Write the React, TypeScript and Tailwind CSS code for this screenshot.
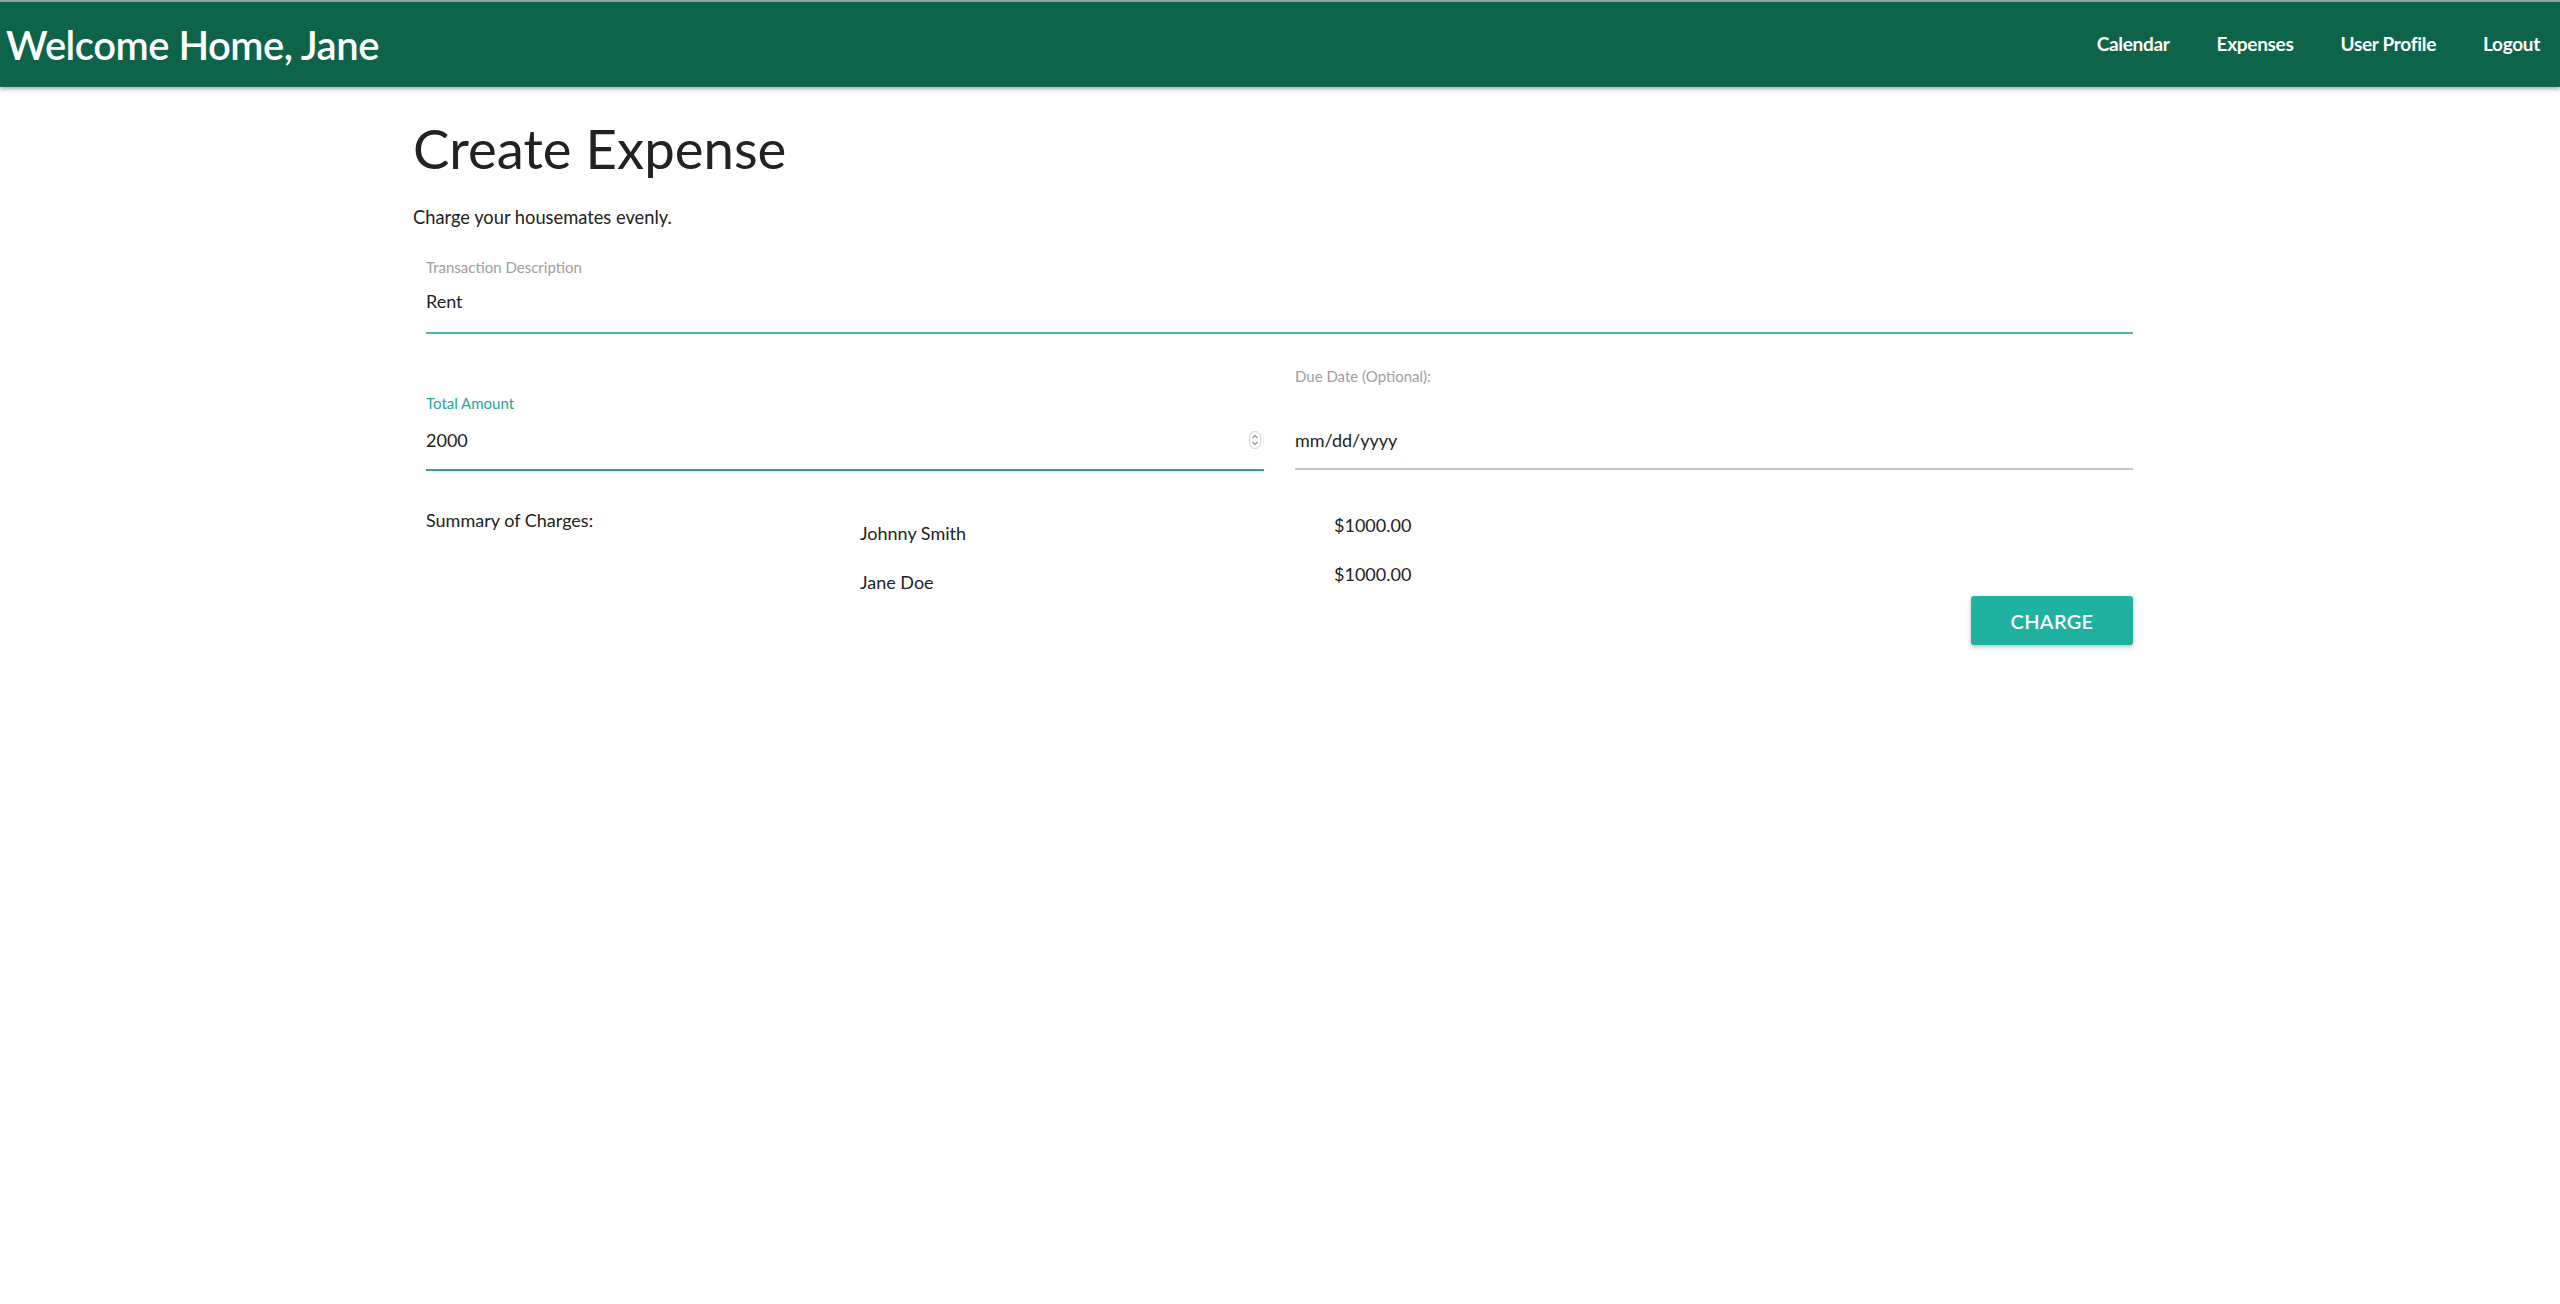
const font = { fontFamily: '"Gill Sans", Lato, "Noto Sans", sans-serif' };

const navLinks = ['Calendar', 'Expenses', 'User Profile', 'Logout'];

const charges = [
  { name: 'Johnny Smith', amount: '$1000.00' },
  { name: 'Jane Doe', amount: '$1000.00' },
];

function Header() {
  return (
    <header className="relative z-10 flex h-[87px] items-center justify-between border-t-2 border-[#8fa59c] bg-[#0e644a] pl-[6px] pr-[20px] shadow-[0_2px_4px_rgba(0,0,0,0.35)]">
      <h1 className="text-[40px] font-semibold tracking-[-0.5px] text-white">Welcome Home, Jane</h1>
      <nav className="flex items-center gap-[47px]">
        {navLinks.map((link) => (
          <a key={link} href="#" className="text-[19px] font-bold tracking-[-0.3px] text-white">
            {link}
          </a>
        ))}
      </nav>
    </header>
  );
}

function Spinner() {
  return (
    <svg width="12" height="18" viewBox="0 0 12 18" className="text-[#8a8a8a]">
      <rect x="0.5" y="0.5" width="11" height="17" rx="5.5" fill="none" stroke="#d5d5d5" />
      <path d="M3.5 7 L6 4.5 L8.5 7" fill="none" stroke="currentColor" strokeWidth="1.1" />
      <path d="M3.5 11 L6 13.5 L8.5 11" fill="none" stroke="currentColor" strokeWidth="1.1" />
    </svg>
  );
}

export default function App() {
  return (
    <div className="min-h-[1304px] bg-white text-[#222]" style={font}>
      <Header />
      <main className="ml-[413px] w-[1720px] pt-[28px]">
        <h2 className="text-[54.5px] leading-[67px] text-[#222]">Create Expense</h2>
        <p className="mt-[24px] text-[18.3px] leading-[22px]">Charge your housemates evenly.</p>

        <form className="pl-[13px]">
          <div className="mt-[30px]">
            <label className="block text-[15px] leading-[18px] text-[#9e9e9e]">Transaction Description</label>
            <div className="mt-[14px] text-[18px] leading-[22px]">Rent</div>
            <div className="mt-[20px] h-[2px] bg-[#4cc08c]" />
          </div>

          <div className="mt-[33px] grid grid-cols-2 gap-[31px]">
            <div className="flex flex-col">
              <label className="mt-[27px] block text-[15px] leading-[18px] text-[#26a69a]">Total Amount</label>
              <div className="mt-[17px] flex items-center justify-between pr-[3px] text-[18px] leading-[22px]">
                <span>2000</span>
                <Spinner />
              </div>
              <div className="mt-[18px] h-[2px] bg-[#26a69a]" />
            </div>
            <div className="flex flex-col">
              <label className="block text-[15px] leading-[18px] text-[#9e9e9e]">Due Date (Optional):</label>
              <div className="mt-[44px] text-[18px] leading-[22px]">mm/dd/yyyy</div>
              <div className="mt-[17px] h-[2px] bg-[#c4c4c4]" />
            </div>
          </div>

          <div className="mt-[38px] flex text-[18px] leading-[22px]">
            <div className="w-[434px]">Summary of Charges:</div>
            <div className="flex flex-col">
              {charges.map((c) => (
                <div key={c.name} className="flex h-[49px]">
                  <span className="mt-[13px] w-[474px]">{c.name}</span>
                  <span className="mt-[5px]">{c.amount}</span>
                </div>
              ))}
            </div>
          </div>

          <div className="-mt-[11px] flex justify-end">
            <button
              type="button"
              className="h-[49px] w-[162px] rounded-[3px] bg-[#1fb2a1] text-[20px] font-semibold tracking-[0.3px] text-white shadow-[0_2px_4px_rgba(0,0,0,0.25)]"
            >
              CHARGE
            </button>
          </div>
        </form>
      </main>
    </div>
  );
}
